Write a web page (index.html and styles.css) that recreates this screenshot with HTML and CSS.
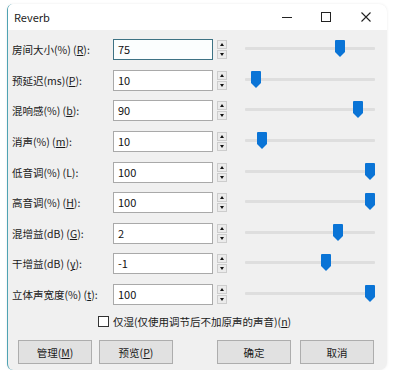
FILE: index.html
```html
<!DOCTYPE html>
<html lang="zh-CN">
<head>
<meta charset="utf-8">
<title>Reverb</title>
<link rel="stylesheet" href="styles.css">
</head>
<body>
<div class="window">
  <div class="titlebar">
    <span class="title">Reverb</span>
    <span class="tb-btn tb-min"><svg width="12" height="12" viewBox="0 0 12 12"><path d="M1 6.5H11" stroke="#222" stroke-width="1"/></svg></span>
    <span class="tb-btn tb-max"><svg width="12" height="12" viewBox="0 0 12 12"><rect x="1.5" y="1.5" width="9" height="9" fill="none" stroke="#222" stroke-width="1"/></svg></span>
    <span class="tb-btn tb-close"><svg width="12" height="12" viewBox="0 0 12 12"><path d="M1.5 1.5L10.5 10.5M10.5 1.5L1.5 10.5" stroke="#222" stroke-width="1.1"/></svg></span>
  </div>
  <div class="content">
    <div class="rows">
      <div class="row">
        <label class="lbl">房间大小(%) (<u>R</u>):</label>
        <div class="input focus">75</div>
        <div class="spin"><span class="sp up"></span><span class="sp down"></span></div>
        <div class="slider"><div class="track"></div><div class="zone"><svg class="thumb" style="left:75%" width="10" height="17" viewBox="0 0 10 17"><path d="M0 1Q0 0 1 0H9Q10 0 10 1V12L5 17L0 12Z" fill="#0a74d6"/></svg></div></div>
      </div>
      <div class="row">
        <label class="lbl">预延迟(ms)(<u>P</u>):</label>
        <div class="input">10</div>
        <div class="spin"><span class="sp up"></span><span class="sp down"></span></div>
        <div class="slider"><div class="track"></div><div class="zone"><svg class="thumb" style="left:5%" width="10" height="17" viewBox="0 0 10 17"><path d="M0 1Q0 0 1 0H9Q10 0 10 1V12L5 17L0 12Z" fill="#0a74d6"/></svg></div></div>
      </div>
      <div class="row">
        <label class="lbl">混响感(%) (<u>b</u>):</label>
        <div class="input">90</div>
        <div class="spin"><span class="sp up"></span><span class="sp down"></span></div>
        <div class="slider"><div class="track"></div><div class="zone"><svg class="thumb" style="left:90%" width="10" height="17" viewBox="0 0 10 17"><path d="M0 1Q0 0 1 0H9Q10 0 10 1V12L5 17L0 12Z" fill="#0a74d6"/></svg></div></div>
      </div>
      <div class="row">
        <label class="lbl">消声(%) (<u>m</u>):</label>
        <div class="input">10</div>
        <div class="spin"><span class="sp up"></span><span class="sp down"></span></div>
        <div class="slider"><div class="track"></div><div class="zone"><svg class="thumb" style="left:10%" width="10" height="17" viewBox="0 0 10 17"><path d="M0 1Q0 0 1 0H9Q10 0 10 1V12L5 17L0 12Z" fill="#0a74d6"/></svg></div></div>
      </div>
      <div class="row">
        <label class="lbl">低音调(%) (L):</label>
        <div class="input">100</div>
        <div class="spin"><span class="sp up"></span><span class="sp down"></span></div>
        <div class="slider"><div class="track"></div><div class="zone"><svg class="thumb" style="left:100%" width="10" height="17" viewBox="0 0 10 17"><path d="M0 1Q0 0 1 0H9Q10 0 10 1V12L5 17L0 12Z" fill="#0a74d6"/></svg></div></div>
      </div>
      <div class="row">
        <label class="lbl">高音调(%) (<u>H</u>):</label>
        <div class="input">100</div>
        <div class="spin"><span class="sp up"></span><span class="sp down"></span></div>
        <div class="slider"><div class="track"></div><div class="zone"><svg class="thumb" style="left:100%" width="10" height="17" viewBox="0 0 10 17"><path d="M0 1Q0 0 1 0H9Q10 0 10 1V12L5 17L0 12Z" fill="#0a74d6"/></svg></div></div>
      </div>
      <div class="row">
        <label class="lbl">混增益(dB) (<u>G</u>):</label>
        <div class="input">2</div>
        <div class="spin"><span class="sp up"></span><span class="sp down"></span></div>
        <div class="slider"><div class="track"></div><div class="zone"><svg class="thumb" style="left:73.3%" width="10" height="17" viewBox="0 0 10 17"><path d="M0 1Q0 0 1 0H9Q10 0 10 1V12L5 17L0 12Z" fill="#0a74d6"/></svg></div></div>
      </div>
      <div class="row">
        <label class="lbl">干增益(dB) (<u>y</u>):</label>
        <div class="input">-1</div>
        <div class="spin"><span class="sp up"></span><span class="sp down"></span></div>
        <div class="slider"><div class="track"></div><div class="zone"><svg class="thumb" style="left:63.3%" width="10" height="17" viewBox="0 0 10 17"><path d="M0 1Q0 0 1 0H9Q10 0 10 1V12L5 17L0 12Z" fill="#0a74d6"/></svg></div></div>
      </div>
      <div class="row">
        <label class="lbl">立体声宽度(%) (<u>t</u>):</label>
        <div class="input">100</div>
        <div class="spin"><span class="sp up"></span><span class="sp down"></span></div>
        <div class="slider"><div class="track"></div><div class="zone"><svg class="thumb" style="left:100%" width="10" height="17" viewBox="0 0 10 17"><path d="M0 1Q0 0 1 0H9Q10 0 10 1V12L5 17L0 12Z" fill="#0a74d6"/></svg></div></div>
      </div>
    </div>
    <div class="check-row">
      <span class="checkbox"></span>
      <span class="check-text">仅湿(仅使用调节后不加原声的声音)(<u>n</u>)</span>
    </div>
    <div class="buttons">
      <button class="btn">管理(<u>M</u>)</button>
      <button class="btn b2">预览(<u>P</u>)</button>
      <button class="btn b3">确定</button>
      <button class="btn b4">取消</button>
    </div>
  </div>
</div>
</body>
</html>
```

FILE: styles.css
```css
* { box-sizing: border-box; }
html, body { margin: 0; padding: 0; background: #ffffff; }
body {
  font-family: "Noto Sans CJK SC", "Noto Sans", sans-serif;
  font-size: 10.5px;
  color: #1a1a1a;
}
.window {
  margin: 4px 0 0 7px;
  width: 380px;
  height: 366px;
  background: #f0f0f0;
  border-left: 1px solid #4fa3b3;
  border-radius: 6px 8px 8px 6px;
  overflow: hidden;
  box-shadow: 0 0 3px rgba(0,0,0,0.08);
}
.titlebar {
  height: 26px;
  background: #ffffff;
  display: flex;
  align-items: center;
  padding-left: 6px;
}
.title { flex: 1; font-size: 11px; color: #222; }
.tb-btn { width: 12px; height: 12px; display: flex; }
.tb-min { margin-right: 27px; }
.tb-max { margin-right: 28px; }
.tb-close { margin-right: 15px; }
.content { padding: 9px 0 0 4px; }
.rows {
  display: flex;
  flex-direction: column;
  gap: 9.625px;
}
.row {
  display: flex;
  height: 21px;
  align-items: center;
}
.lbl { width: 101px; white-space: nowrap; color: #1a1a1a; }
.input {
  width: 100px;
  height: 21px;
  background: #fff;
  border: 1px solid #a9a9a9;
  padding-left: 4px;
  font-size: 11px;
  line-height: 19px;
  color: #111;
}
.input.focus { border-color: #3d7284; background: #fbfefe; }
.spin {
  margin-left: 4px;
  width: 10px;
  height: 21px;
  display: flex;
  flex-direction: column;
  justify-content: space-between;
  padding: 1px 0;
}
.sp {
  display: block;
  height: 9px;
  background: #ebebeb;
  border: 1px solid #cdcdcd;
  position: relative;
}
.sp::after {
  content: "";
  position: absolute;
  left: 2px;
  top: 2px;
  border-left: 2px solid transparent;
  border-right: 2px solid transparent;
}
.sp.up::after { border-bottom: 3px solid #111; }
.sp.down::after { border-top: 3px solid #111; }
.slider {
  margin-left: 18px;
  width: 130px;
  height: 21px;
  position: relative;
}
.track {
  margin-top: 8px;
  height: 3px;
  background: #dedede;
  border-radius: 1px;
}
.zone {
  position: absolute;
  left: 0;
  right: 10px;
  top: 0;
  bottom: 0;
}
.thumb {
  position: absolute;
  top: 1px;
}
.check-row {
  margin-top: 11px;
  padding-left: 86px;
  display: flex;
  align-items: center;
  height: 11px;
}
.checkbox {
  width: 11px;
  height: 11px;
  border: 1px solid #333;
  background: #fff;
  margin-right: 4px;
}
.check-text { white-space: nowrap; }
.buttons {
  margin-top: 13px;
  padding-left: 6px;
  display: flex;
}
.btn {
  width: 74px;
  height: 24px;
  background: #e1e1e1;
  border: 1px solid #adadad;
  font-family: "Noto Sans CJK SC", "Noto Sans", sans-serif;
  font-size: 10.5px;
  color: #1a1a1a;
  padding: 0;
}
.b2 { margin-left: 7px; }
.b3 { margin-left: 44px; }
.b4 { margin-left: 9px; }
```
